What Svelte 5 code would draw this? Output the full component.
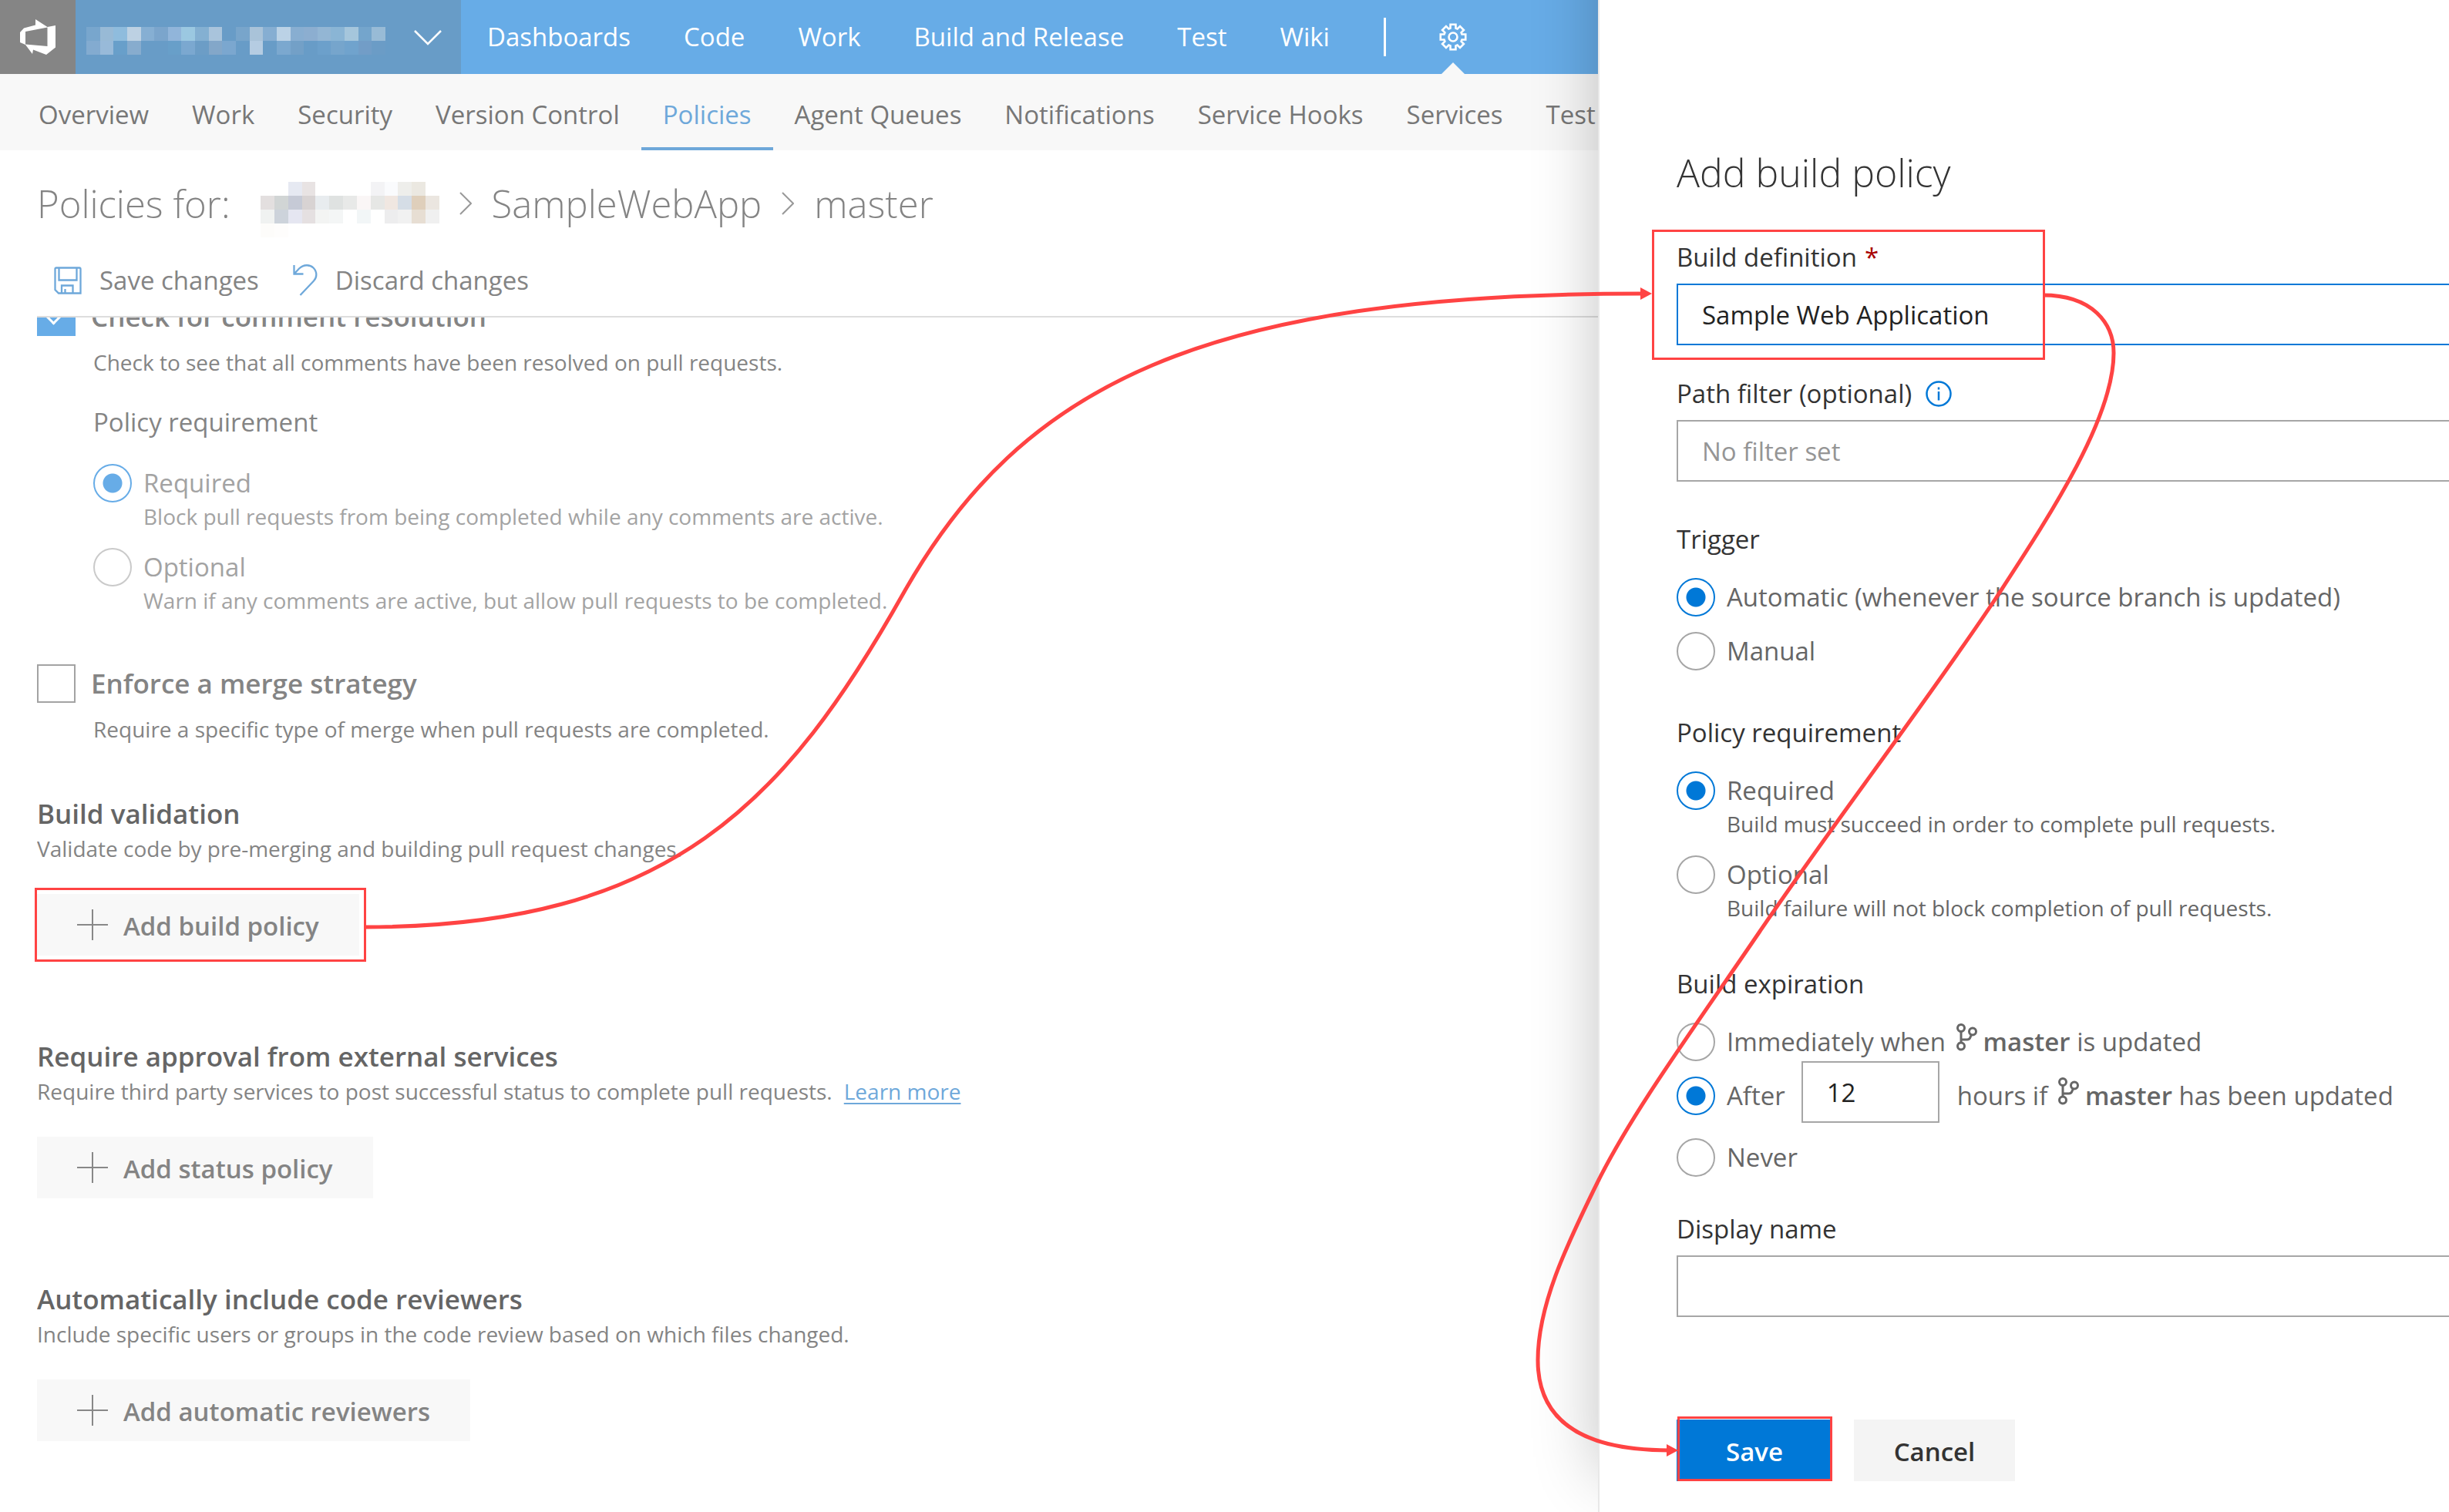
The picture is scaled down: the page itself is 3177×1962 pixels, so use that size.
<script>
  const hubs = ['Dashboards', 'Code', 'Work', 'Build and Release', 'Test', 'Wiki'];
  const tabs = ['Overview', 'Work', 'Security', 'Version Control', 'Policies', 'Agent Queues', 'Notifications', 'Service Hooks', 'Services', 'Test'];

  // Pixelated masks that hide the account and project names; '-' leaves a cell empty.
  const accountMask = [
    '78a6cd 98bad6 8fbcdd bdd1e3 86afd3 7ba5cc 91b5da 9bc8e1 84b0d2 a9c4dc - 78a5cb a9c3d9 86aed2 bbd2e6 88aed1 8caed0 93b6d4 8ab5d5 a5c6dc 74a5cc 98bbd6',
    '83abd0 98bad9 689fca 87acce - - 689fc9 7ba8d0 6c9dc6 83a7c9 7ba7cf - b5cce2 - 7ba8cf 73a0c7 - 6ca0cb 76a5cc 70a3cd 729dc7 6b9cc6'
  ];
  const projectMask = [
    '- - e6e9f2 e8e3e3 - - - - f3f3f5 fafbfd eeeeeb ebe8e1 -',
    'e3dfdf d1d5d5 c6cad6 d8d3d3 e8ecef dfe2e1 e8e9e8 faf6f6 e6e7e5 f0e7e1 d5dde6 dfcfbb ebe6e0',
    'f0f2f1 cdd3db e5e6f1 e5e0e1 f3f4f3 f4f6f6 - f2f6f7 - ededee f1f1f1 e7ded3 f0f0f0',
    'fdfcfa fefdfc - - - - - - - - - - -'
  ];
  const cells = (rows) =>
    rows.flatMap((row, y) =>
      row.split(' ').map((color, x) => ({ x, y, color })).filter((c) => c.color !== '-')
    );

  const sections = [
    { title: 'Build validation', text: 'Validate code by pre-merging and building pull request changes.', action: 'Add build policy' },
    { title: 'Require approval from external services', text: 'Require third party services to post successful status to complete pull requests.', link: 'Learn more', action: 'Add status policy' },
    { title: 'Automatically include code reviewers', text: 'Include specific users or groups in the code review based on which files changed.', action: 'Add automatic reviewers' }
  ];

  const teeth = [0, 45, 90, 135, 180, 225, 270, 315];
  const gear = teeth
    .map((deg) => {
      const at = (r, off) => {
        const a = ((deg + off) * Math.PI) / 180;
        return `${(18 + r * Math.sin(a)).toFixed(2)} ${(18 - r * Math.cos(a)).toFixed(2)}`;
      };
      return [at(12, -17), at(16.6, -12), at(16.6, 12), at(12, 17)].join(' L');
    })
    .join(' L');
</script>

{#snippet mask(rows, cols, width, label)}
  <svg class="mask" {width} height={rows.length * 18} viewBox="0 0 {cols} {rows.length}" preserveAspectRatio="none" shape-rendering="crispEdges" role="img" aria-label={label}>
    {#each cells(rows) as c}
      <rect x={c.x} y={c.y} width="1" height="1" fill="#{c.color}" />
    {/each}
  </svg>
{/snippet}

{#snippet branch()}
  <svg class="branch" width="28" height="36" viewBox="0 0 28 36" fill="none" stroke="currentColor" stroke-width="3" aria-hidden="true">
    <circle cx="6" cy="6" r="4.5" /><circle cx="21" cy="10.5" r="4.5" /><circle cx="6" cy="29.5" r="4.5" />
    <path d="M6 10.5V25M6 21H14Q17 21 18 18L19.5 14.5" />
  </svg>
{/snippet}

<div class="page">
  <div class="main">
    <header class="top">
      <a class="logo" href="#home" aria-label="Home">
        <svg width="46" height="46" viewBox="25 24 46 46" aria-hidden="true">
          <path fill="#fff" fill-rule="evenodd" d="M45 24L60.5 34L71 32V60.500L59 70L42 63.500L41 69L32 57L25 54V41L30 35.500L45 31.500ZM60.500 34.500L32 40V56.500L60.500 59Z" />
        </svg>
      </a>
      <button class="project" aria-label="Switch project">
        {@render mask(accountMask, 22, 388, 'Hidden project name')}
        <svg width="36" height="20" viewBox="0 0 36 20" fill="none" stroke="#fff" stroke-width="2.500" aria-hidden="true"><path d="M1 1L18 18L35 1" /></svg>
      </button>
      <nav class="hubs">
        {#each hubs as hub}<a href="#{hub}">{hub}</a>{/each}
      </nav>
      <a class="settings" href="#settings" aria-label="Settings">
        <svg width="36" height="36" viewBox="0 0 36 36" fill="none" stroke="#fff" stroke-width="2.600" aria-hidden="true">
          <path d="M{gear}Z" /><circle cx="18" cy="18" r="5.500" />
        </svg>
      </a>
    </header>

    <nav class="tabs">
      {#each tabs as tab}<a href="#{tab}" class:active={tab === 'Policies'}>{tab}</a>{/each}
    </nav>

    <h1 class="crumbs">
      <span class="for">Policies for:</span>
      {@render mask(projectMask, 13, 232, 'Hidden project name')}
      <svg width="16" height="30" viewBox="0 0 16 30" fill="none" stroke="#999" stroke-width="2" aria-hidden="true"><path d="M1 1L15 15L1 29" /></svg>
      <span>SampleWebApp</span>
      <svg width="16" height="30" viewBox="0 0 16 30" fill="none" stroke="#999" stroke-width="2" aria-hidden="true"><path d="M1 1L15 15L1 29" /></svg>
      <span>master</span>
    </h1>

    <div class="toolbar">
      <button>
        <svg width="36" height="36" viewBox="0 0 36 36" fill="none" stroke="#6ea8da" stroke-width="2.300" aria-hidden="true">
          <path d="M1.500 3Q1.500 1.500 3 1.500H33Q34.500 1.500 34.500 3V34.500H6L1.500 30ZM6.500 1.500V17.500H29.500V1.500M10 34.500V24.500H24.500V34.500M14.500 29V34.500" />
        </svg>
        Save changes
      </button>
      <button>
        <svg width="32" height="42" viewBox="0 0 32 42" fill="none" stroke="#6ea8da" stroke-width="2.300" aria-hidden="true">
          <path d="M1.500 1V12.500H13.500M1.500 12.500L8 5.500C14 0 22 0 26.500 4.500C31.500 9.500 31.500 17 27 21.500L9.500 40" />
        </svg>
        Discard changes
      </button>
    </div>

    <div class="scroll">
      <div class="policies">
        <label class="check"><input type="checkbox" checked />Check for comment resolution</label>
        <div class="nested">
          <p class="note">Check to see that all comments have been resolved on pull requests.</p>
          <fieldset class="faded">
            <legend>Policy requirement</legend>
            <label class="option"><input type="radio" name="comments" checked />Required</label>
            <p class="hint">Block pull requests from being completed while any comments are active.</p>
            <label class="option spaced"><input type="radio" name="comments" />Optional</label>
            <p class="hint">Warn if any comments are active, but allow pull requests to be completed.</p>
          </fieldset>
        </div>
        <label class="check second"><input type="checkbox" />Enforce a merge strategy</label>
        <div class="nested">
          <p class="note">Require a specific type of merge when pull requests are completed.</p>
        </div>
        <div class="sections">
          {#each sections as s}
            <section>
              <h2>{s.title}</h2>
              <p>{s.text}{#if s.link}<a href="#learn">{s.link}</a>{/if}</p>
              <button>
                <svg width="40" height="40" viewBox="0 0 40 40" stroke="#888" stroke-width="2" aria-hidden="true"><path d="M20 0V40M0 20H40" /></svg>
                <span>{s.action}</span>
              </button>
            </section>
          {/each}
        </div>
      </div>
    </div>
  </div>

  <aside class="panel">
    <form>
      <h1>Add build policy</h1>

      <label class="field" for="definition">Build definition <span class="star">*</span></label>
      <input id="definition" class="box focused" type="text" value="Sample Web Application" />

      <label class="field second" for="filter">Path filter (optional)
        <svg width="34" height="34" viewBox="0 0 34 34" fill="none" stroke="#0078d7" stroke-width="2.500" aria-hidden="true"><circle cx="17" cy="17" r="15.500" /><path d="M17 14V25.500M17 8.500V11.500" /></svg>
      </label>
      <input id="filter" class="box" type="text" placeholder="No filter set" />

      <fieldset class="trigger">
        <legend>Trigger</legend>
        <label class="option"><input type="radio" name="trigger" checked />Automatic (whenever the source branch is updated)</label>
        <label class="option manual"><input type="radio" name="trigger" />Manual</label>
      </fieldset>

      <fieldset>
        <legend>Policy requirement</legend>
        <label class="option"><input type="radio" name="requirement" checked />Required</label>
        <p class="hint">Build must succeed in order to complete pull requests.</p>
        <label class="option spaced"><input type="radio" name="requirement" />Optional</label>
        <p class="hint">Build failure will not block completion of pull requests.</p>
      </fieldset>

      <fieldset>
        <legend>Build expiration</legend>
        <label class="option"><input type="radio" name="expiration" /><span>Immediately when {@render branch()}<b>master</b> is updated</span></label>
        <div class="after">
          <label class="option"><input type="radio" name="expiration" checked />After</label>
          <input class="box hours" type="text" value="12" aria-label="Hours" />
          <span class="tail">hours if {@render branch()}<b>master</b> has been updated</span>
        </div>
        <label class="option manual"><input type="radio" name="expiration" />Never</label>
      </fieldset>

      <label class="field name" for="display">Display name</label>
      <input id="display" class="box" type="text" />

      <div class="actions">
        <button type="button" class="save">Save</button>
        <button type="button" class="cancel">Cancel</button>
      </div>
    </form>
  </aside>

  <svg class="callouts" viewBox="0 0 3177 1962" fill="none" stroke="#ff4343" aria-hidden="true">
    <g stroke-width="3">
      <rect x="46.500" y="1153.500" width="427" height="93" />
      <rect x="2144.500" y="299.500" width="507" height="166" />
      <rect x="2177.500" y="1839.500" width="198" height="81" />
    </g>
    <g stroke-width="5">
      <path d="M473 1203C870 1203 1020 1040 1173 768C1325 500 1560 381 2130 381" />
      <path d="M2650 383C2715 383 2742 420 2742 458C2742 545 2655 675 2590 775C2500 910 2370 1080 2282 1210C2190 1345 2120 1440 2074 1531C2030 1620 1995 1695 1995 1765C1995 1845 2055 1882 2165 1882" />
    </g>
    <g fill="#ff4343" stroke="none">
      <path d="M2128 373L2143 381L2128 389ZM2162 1874L2177 1882L2162 1890Z" />
    </g>
  </svg>
</div>

<style>
  :global(body) { background: #fff; }
  .page, .page :global(*) { box-sizing: border-box; }
  .page {
    position: relative;
    display: grid;
    grid-template-columns: minmax(0, 1fr) 1104px;
    min-height: 100vh;
    overflow: hidden;
    font: 400 33px/46px 'Open Sans', 'Noto Sans', sans-serif;
    color: #848484;
  }
  h1, h2, p, fieldset, legend { margin: 0; padding: 0; border: 0; }
  fieldset { min-width: 0; }
  a { color: inherit; text-decoration: none; }
  button, input { font: inherit; color: inherit; }
  button { border: 0; padding: 0; background: none; cursor: pointer; }
  svg { flex: none; }

  .main { overflow: hidden; white-space: nowrap; }

  .top { display: flex; align-items: center; height: 96px; background: #67ace7; color: #fff; }
  .logo { display: flex; align-items: center; justify-content: center; width: 98px; height: 96px; background: #858585; }
  .project { display: flex; align-items: center; justify-content: space-between; width: 500px; height: 96px; padding: 9px 25px 0 14px; background: #689cc7; }
  .project svg:last-child { margin-bottom: 8px; }
  .hubs { display: flex; align-items: center; gap: 69px; padding: 0 70px 0 34px; height: 50px; border-right: 3px solid #fff; }
  .settings { position: relative; display: flex; align-items: center; height: 96px; padding: 0 69px; }
  .settings::after { content: ''; position: absolute; left: 72px; bottom: 0; border: 15px solid transparent; border-top: 0; border-bottom-color: #f8f8f8; }

  .tabs { display: flex; height: 99px; padding-left: 22px; background: #f8f8f8; color: #777; }
  .tabs a { padding: 0 28px; line-height: 106px; }
  .tabs .active { height: 99px; color: #6ea8da; border-bottom: 4px solid #6ea8da; }

  .crumbs { display: flex; align-items: center; gap: 26px; padding: 37px 0 45px 48px; font-size: 49px; line-height: 64px; font-weight: 300; }
  .crumbs .mask { margin: 4px 0 -12px; }
  .for { margin-right: 13px; }

  .toolbar { display: flex; gap: 44px; padding: 0 0 23px 70px; }
  .toolbar button { display: flex; align-items: center; gap: 23px; height: 46px; }

  .scroll { margin-left: 48px; border-top: 2px solid #ddd; overflow: hidden; }
  .policies { margin-top: -26px; }
  .check { display: flex; align-items: center; gap: 20px; font-weight: 600; font-size: 35px; line-height: 50px; }
  .check.second { margin-top: 65px; }
  .check input { appearance: none; width: 50px; height: 50px; margin: 0; border: 2px solid #a3a3a3; }
  .check input:checked { border: 0; background: #67ace7; }
  .check input:checked::after { content: ''; display: block; width: 14px; height: 14px; margin: 15px 0 0 13px; border: solid #fff; border-width: 0 3px 3px 0; transform: rotate(45deg); }
  .nested { padding-left: 73px; }
  .note { padding-top: 16px; font-size: 28px; line-height: 36px; }
  .faded { padding-top: 37px; --ring: #cacaca; --on: #67ace7; }
  .faded legend { float: left; margin-bottom: 31px; }
  .faded .option, .faded .hint { clear: both; color: #a3a3a3; }

  .option { display: flex; align-items: center; gap: 15px; line-height: 50px; }
  .option input { appearance: none; flex: none; width: 50px; height: 50px; margin: 0; border: 2px solid var(--ring); border-radius: 50%; }
  .option input:checked { border-color: var(--on); background: radial-gradient(circle, var(--on) 12px, transparent 13px); }
  .option.spaced { margin-top: 23px; }
  .hint { padding-left: 65px; font-size: 28px; line-height: 36px; }

  .sections { display: grid; gap: 108px; padding: 69px 0 93px; }
  .sections h2 { font-size: 35px; line-height: 46px; font-weight: 600; color: #656565; }
  .sections p { margin-top: 4px; font-size: 28px; line-height: 36px; }
  .sections p a { margin-left: 15px; color: #6ea8da; text-decoration: underline; text-underline-offset: 4px; }
  .sections button { display: flex; align-items: center; gap: 20px; height: 80px; margin-top: 41px; padding: 0 52px; background: #f8f8f8; font-weight: 600; }
  .sections button span { padding-top: 4px; }

  .panel { position: relative; isolation: isolate; --ring: #a6a6a6; --on: #0078d7; color: #666; white-space: nowrap; }
  .panel::before { content: ''; position: absolute; z-index: -1; inset: -100px -100px 50px 0; box-shadow: 0 0 80px rgba(0, 0, 0, 0.24); }
  form { height: 100%; padding: 192px 0 40px 100px; border-left: 2px solid #e8e8e8; background: #fff; overflow: hidden; }
  form h1 { font-size: 50px; line-height: 64px; font-weight: 300; color: #333; }
  .field { display: flex; align-items: center; gap: 10px; margin: 55px 0 11px; color: #333; }
  .field svg { margin-left: 8px; }
  .field.second { margin-top: 40px; }
  .field.name { margin-top: 45px; }
  .star { color: #a80000; }
  .box { display: block; width: 100%; height: 80px; padding: 0 31px; border: 2px solid #a6a6a6; border-right: 0; border-radius: 0; background: #fff; color: #222; outline: 0; }
  .box.focused { border-color: #0078d7; }
  .box::placeholder { color: #959595; opacity: 1; }
  form fieldset { padding-top: 58px; }
  form .trigger { padding-top: 52px; }
  form legend { float: left; margin-bottom: 27px; color: #333; }
  form .option { clear: both; }
  form .manual { margin-top: 20px; }
  .branch { margin: 0 7px 0 5px; vertical-align: 0; }
  b { font-weight: 600; }
  .after { display: flex; align-items: flex-end; }
  .after .option, .tail { margin-bottom: 10px; line-height: 50px; }
  .hours { width: 179px; margin: 0 23px 0 21px; border-right: 2px solid #a6a6a6; }
  .actions { display: flex; gap: 28px; margin-top: 133px; font-weight: 600; }
  .actions button { height: 80px; padding-top: 4px; }
  .save { width: 202px; background: #0078d7; color: #fff; }
  .cancel { width: 209px; background: #f4f4f4; color: #333; }

  .callouts { position: absolute; top: 0; left: 0; width: 100%; height: auto; pointer-events: none; }
</style>
